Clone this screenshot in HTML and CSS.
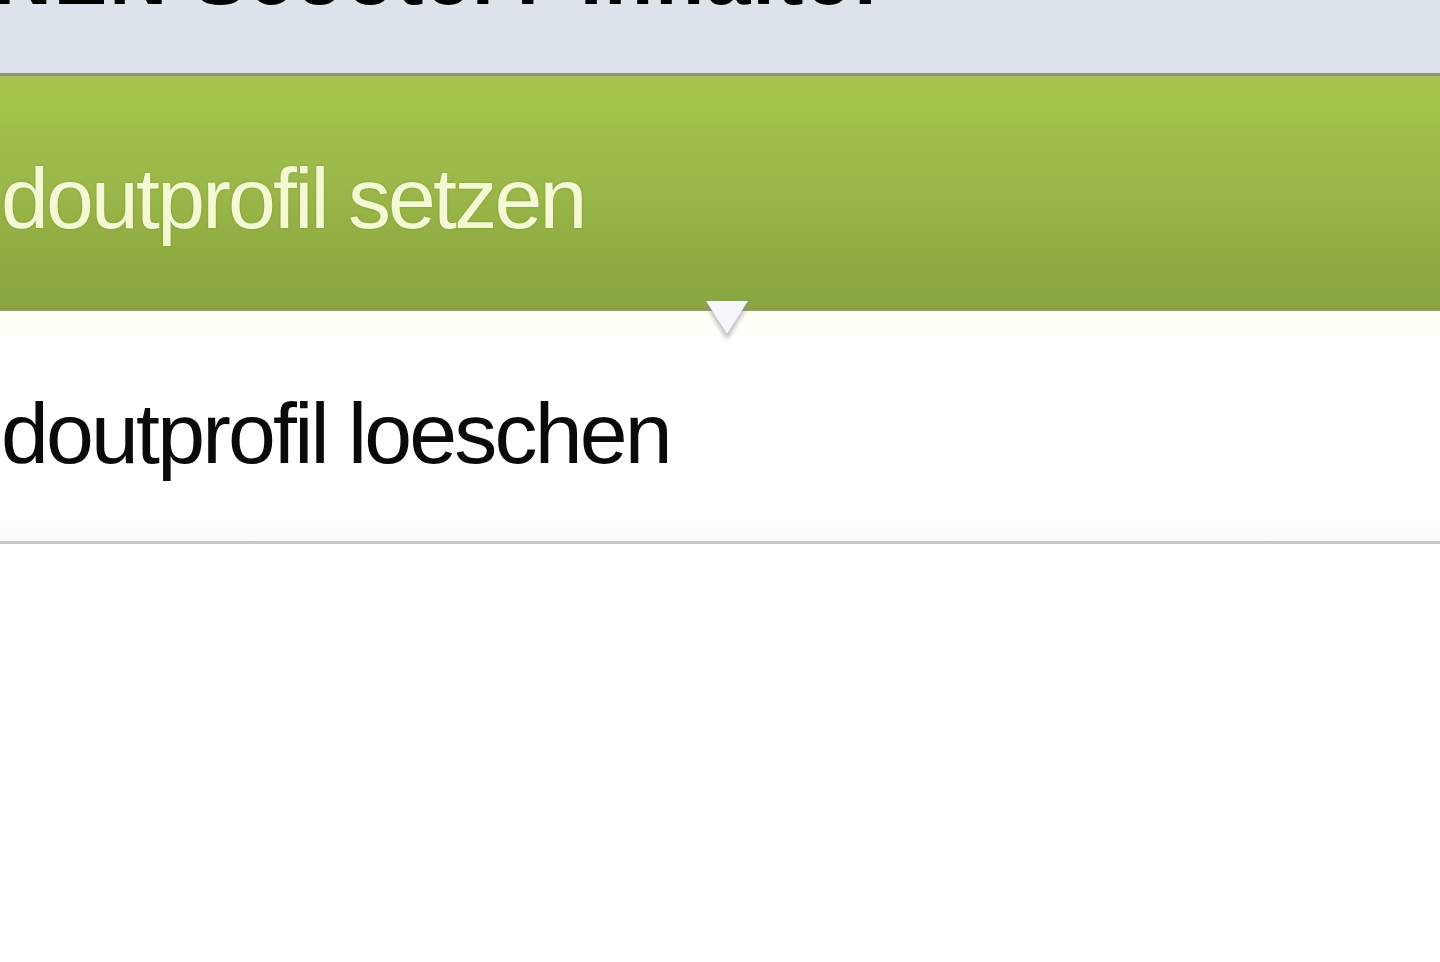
FILE: index.html
```html
<!DOCTYPE html>
<html lang="de">
<head>
<meta charset="utf-8">
<title>Profil</title>
<link rel="stylesheet" href="styles.css">
</head>
<body>
<div class="page">
  <header class="topbar">
    <h1 class="title">NEN Scooter? Inhalte:</h1>
  </header>
  <ul class="menu">
    <li class="item active">
      <span class="label">doutprofil setzen</span>
      <svg class="pointer" width="60" height="48" viewBox="0 0 60 48">
        <defs>
          <filter id="sh" x="-30%" y="-30%" width="160%" height="160%">
            <feGaussianBlur stdDeviation="2"/>
          </filter>
        </defs>
        <polygon points="7,6 53,6 30,44" fill="#8a8a98" opacity="0.55" filter="url(#sh)"/>
        <polygon points="9,5 51,5 30,38" fill="#f7f7fb"/>
      </svg>
    </li>
    <li class="item">
      <span class="label">doutprofil loeschen</span>
    </li>
  </ul>
</div>
</body>
</html>
```

FILE: styles.css
```css
html, body {
  margin: 0;
  padding: 0;
  background: #ffffff;
}

.page {
  width: 1440px;
  height: 962px;
  overflow: hidden;
  font-family: "Liberation Sans", Arial, sans-serif;
}

.topbar {
  height: 73px;
  background: #dce3ea;
  overflow: hidden;
  border-bottom: 3px solid #8c9873;
}

.title {
  margin: -63px 0 0 -6px;
  font-size: 80px;
  line-height: 80px;
  font-weight: bold;
  color: #000000;
  white-space: nowrap;
  letter-spacing: 2px;
}

.menu {
  list-style: none;
  margin: 0;
  padding: 0;
}

.item {
  position: relative;
  height: 233px;
  box-sizing: border-box;
  padding-top: 79px;
  padding-left: 1px;
  overflow: visible;
  white-space: nowrap;
}

.label {
  display: inline-block;
  font-size: 86px;
  line-height: 86px;
  letter-spacing: -2.8px;
  color: #0a0a0a;
}

.item.active {
  height: 235px;
  background: linear-gradient(to bottom,
    #abc25a 0px,
    #a7c34c 10px,
    #a3c645 30px,
    #a0bd4a 60px,
    #9cb74a 110px,
    #93ae42 160px,
    #8ea93f 200px,
    #8aa841 225px,
    #8ea83c 231px,
    #8a9856 233px,
    #9aa070 235px);
  z-index: 1;
}

.item.active .label {
  color: #f4f8d3;
  text-shadow: 0 0 2px rgba(90, 110, 30, 0.5);
}

.item:not(.active) {
  background: linear-gradient(to bottom, #fffff2 0px, #ffffff 40px, #ffffff 200px, #fafafa 228px);
  border-bottom: 3px solid #c6c6c6;
}

.pointer {
  position: absolute;
  left: 697px;
  top: 220px;
}
```
